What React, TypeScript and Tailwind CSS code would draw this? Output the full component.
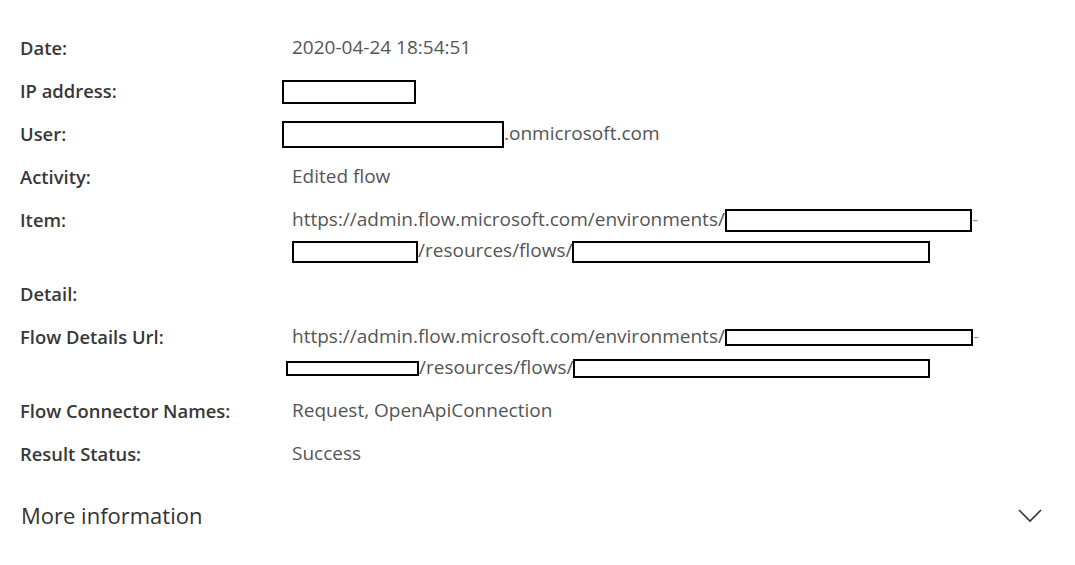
import React from "react";

const Box = ({ w, h, className = "" }: { w: number; h: number; className?: string }) => (
  <span
    className={"inline-block align-middle border-2 border-black bg-white " + className}
    style={{ width: w, height: h }}
  />
);

const Row = ({ label, children }: { label: string; children?: React.ReactNode }) => (
  <div className="flex py-[6px] leading-[31px]">
    <div className="w-[272px] shrink-0 font-semibold text-[#383838] text-[18.4px]">{label}</div>
    <div className="text-[#555] text-[19px]">{children}</div>
  </div>
);

export default function App() {
  return (
    <div
      className="w-[1075px] h-[565px] bg-white pt-[26px] pl-[20px] pr-[30px]"
      style={{ fontFamily: '"Open Sans", "Noto Sans", sans-serif' }}
    >
      <Row label="Date:">2020-04-24 18:54:51</Row>
      <Row label="IP address:">
        <Box w={134} h={24} className="-ml-[10px]" />
      </Row>
      <Row label="User:">
        <span className="whitespace-nowrap">
          <Box w={222} h={27} className="-ml-[10px]" />
          .onmicrosoft.com
        </span>
      </Row>
      <Row label="Activity:">Edited flow</Row>
      <Row label="Item:">
        <div className="whitespace-nowrap">
          https://admin.flow.microsoft.com/environments/
          <Box w={247} h={23} />
          <span className="text-[#999]">-</span>
        </div>
        <div className="whitespace-nowrap">
          <Box w={126} h={22} />
          /resources/flows/
          <Box w={358} h={22} />
        </div>
      </Row>
      <Row label="Detail:" />
      <Row label="Flow Details Url:">
        <div className="whitespace-nowrap">
          https://admin.flow.microsoft.com/environments/
          <Box w={248} h={17} />
          <span className="text-[#999]">-</span>
        </div>
        <div className="whitespace-nowrap">
          <Box w={133} h={15} className="-ml-[6px]" />
          /resources/flows/
          <Box w={357} h={19} />
        </div>
      </Row>
      <Row label="Flow Connector Names:">Request, OpenApiConnection</Row>
      <Row label="Result Status:">Success</Row>
      <div className="flex items-center justify-between mt-[24px] pr-[2px]">
        <div className="text-[22px] text-[#333] pl-[1px]">More information</div>
        <svg width="24" height="14" viewBox="0 0 24 14" className="mr-[1px]">
          <path d="M1 1 L12 12 L23 1" fill="none" stroke="#333" strokeWidth="1.6" />
        </svg>
      </div>
    </div>
  );
}
